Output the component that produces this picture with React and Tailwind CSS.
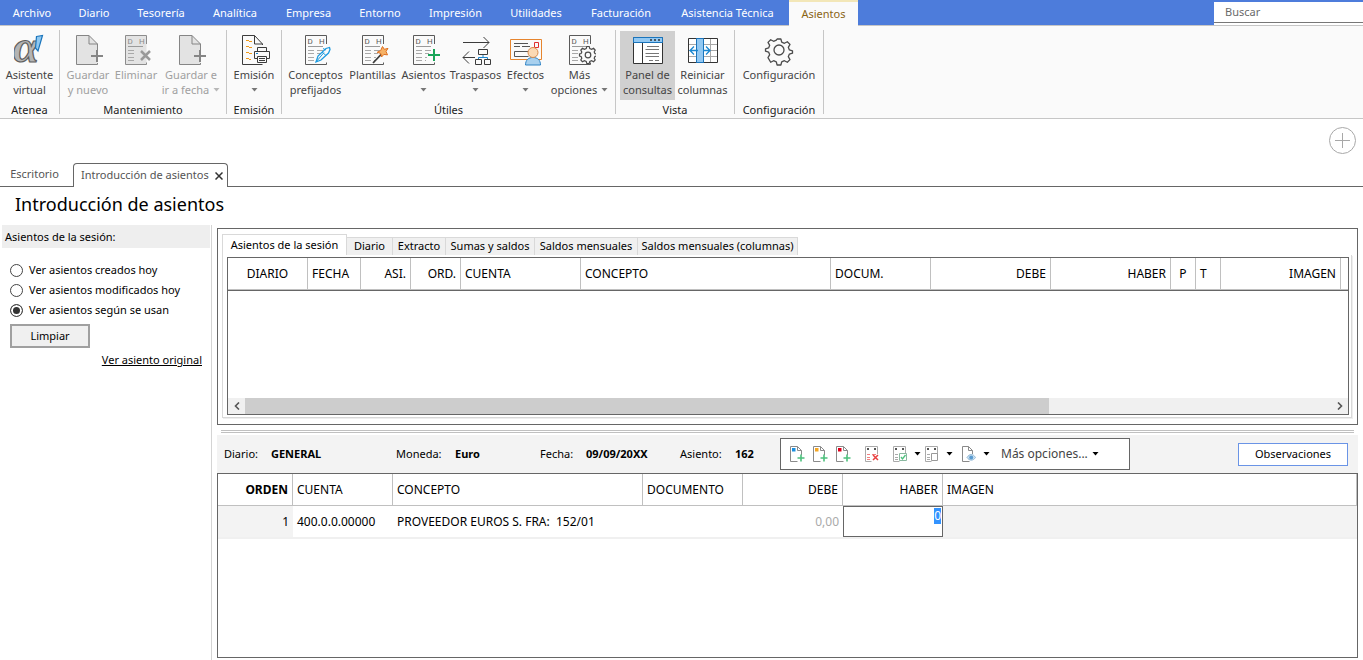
import React from 'react';

/* ---------- Icons ---------- */

function Svg({ size = 32, children }) {
  return (
    <svg width={size} height={size} viewBox={`0 0 ${size} ${size}`} fill="none" aria-hidden="true" className="block shrink-0">
      {children}
    </svg>
  );
}

function AlphaIcon() {
  return (
    <Svg>
      <text x="-1" y="28" fontSize="47" fontWeight="bold" fontStyle="italic" fontFamily="Liberation Serif, serif" fill="#b4b4b4" stroke="#5f5f5f" strokeWidth="1.2">α</text>
      <path d="M22.5 2.5 L28.5 1.5 L24 17 L21.5 14 Z" fill="#8fc8f0" stroke="#1a74bb" strokeWidth="1.2" />
    </Svg>
  );
}

function NewDocIcon() {
  return (
    <Svg>
      <path d="M25.5 17.5V10L17 1.5H4.5v29h21V28" fill="#e3e3e3" />
      <path d="M25.5 16V10L17 1.5H4.5v29h21V29M17 1.5V10h8.5" stroke="#858585" />
      <path d="M25 16v12M19 22h12" stroke="#858585" strokeWidth="2" />
    </Svg>
  );
}

function LedgerBase({ stroke = '#5a5a5a', fill = 'none', cut = 17 }) {
  return (
    <>
      <path d="M5.500 1.500h21v29h-21z" fill={fill} />
      <path d={`M26.500 ${cut - 7}V1.500h-21v29h21v-2`} stroke={stroke} />
      <text x="7.500" y="9.500" fontSize="8" fontFamily="Roboto, sans-serif" fill={stroke}>D</text>
      <text x="19" y="9.500" fontSize="8" fontFamily="Roboto, sans-serif" fill={stroke}>H</text>
      <path d="M8 12.500h15" stroke="#9a9a9a" />
      <path d="M8 16.500h6M8 19.500h6M8 23.500h6M8 26.500h6" stroke="#a8a8a8" />
    </>
  );
}

function RightRows() {
  return <path d="M17 16.500h6M17 19.500h4M17 23.500h2M17 26.500h1" stroke="#a8a8a8" />;
}

function DeleteIcon() {
  return (
    <Svg>
      <LedgerBase stroke="#8c8c8c" fill="#e3e3e3" />
      <path d="M21 17l9 9M30 17l-9 9" stroke="#999" strokeWidth="2.500" />
    </Svg>
  );
}

function EmissionIcon() {
  return (
    <Svg>
      <path d="M24.500 11V10L16.500 1.500h-12v29h20M16.500 1.500V10h8" stroke="#3c3c3c" />
      <path d="M8 6.500h3M8 12.500h3M8 18.500h3M8 24.500h3" stroke="#f09a1a" />
      <path d="M11 7.500h3M11 13.500h3M11 19.500h3M11 25.500h2" stroke="#f09a1a" />
      <path d="M19.500 17.500v-4h9v4M19.500 24.500h-3v-7h15v7h-3" fill="#fafafa" stroke="#3c3c3c" />
      <path d="M19.500 22.500h9v6h-9zM21 24.500h6M21 26.500h6" fill="#fafafa" stroke="#3c3c3c" />
      <path d="M18 19.500h2" stroke="#1a86d0" />
    </Svg>
  );
}

function ConceptsIcon() {
  return (
    <Svg>
      <LedgerBase />
      <RightRows />
      <path d="M16 28l2-6 8-7.500 3.500-1 .5 2-1.500 3.500-7.500 7z" fill="#fafafa" stroke="#1c9be0" strokeWidth="1.300" />
      <path d="M16 28l8-9.500M22 18l4 3.500M26 16l-3-1.500" stroke="#1c9be0" />
    </Svg>
  );
}

function TemplatesIcon() {
  return (
    <Svg>
      <LedgerBase />
      <RightRows />
      <path d="M16 29L25 19.500" stroke="#3c3c3c" strokeWidth="1.800" />
      <path d="M25.500 12.500l1.800 2.800 3.700-.9-2 3 1.500 3.500-3.600-.5-2.400 2.600-.7-3.500-3.600-1.200 3.500-1.800z" fill="#f6b266" stroke="#e07020" />
    </Svg>
  );
}

function EntriesIcon() {
  return (
    <Svg>
      <LedgerBase />
      <RightRows />
      <path d="M26 15v12M20 21h12" stroke="#18a558" strokeWidth="2" />
    </Svg>
  );
}

function TransferIcon() {
  return (
    <Svg>
      <path d="M3 8.500h26M23.500 3l5.500 5.500-5.500 5.500M3 23.500h12M9 17.500l-6 6 6 6" stroke="#3c3c3c" />
      <path d="M18.500 15.500h9v5h-9zM15.500 25.500h6v5h-6zM24.500 25.500h6v5h-6z" stroke="#3c3c3c" />
      <path d="M23 21v3M18.500 25v-1.500h9V25" stroke="#1a86d0" />
    </Svg>
  );
}

function EffectsIcon() {
  return (
    <Svg>
      <path d="M.500 5.500h31v20H.500z" stroke="#e6852e" />
      <path d="M4 9.500h14M4 12.500h6M12 12.500h8M20 17.500H4.500v5h14" stroke="#555" />
      <path d="M24.500 8.500h4v5h-4z" stroke="#e03030" />
      <path d="M15.500 31c0-5 3-7.500 7.500-7.500s7.500 2.500 7.500 7.500z" fill="#a8d0ee" stroke="#2f83c5" />
      <circle cx="23" cy="18.500" r="5" fill="#fbd9b4" stroke="#d98a4a" />
    </Svg>
  );
}

const GEAR =
  'M12.100 2h3.800l.8 3.200 2.700 1.100 2.900-1.600 2.700 2.700-1.700 2.900 1.100 2.600 3.100.9v2.400l-3.100.9-1.100 2.600 1.700 2.900-2.700 2.700-2.900-1.600-2.700 1.100-.8 3.200h-3.800l-.8-3.200-2.700-1.100-2.900 1.600L3 20.600l1.700-2.900-1.100-2.600L.500 14.200v-2.400l3.100-.9 1.100-2.600L3 5.400l2.700-2.700 2.900 1.600 2.700-1.100z';

function MoreOptionsIcon() {
  return (
    <Svg>
      <LedgerBase />
      <path d="M22.800 12.500h2.400l.6 2.100 1.800.8 2-1.100 1.600 1.700-1 1.900.7 1.600 1.600.5v2l-1.600.5-.7 1.700 1 1.800-1.600 1.700-2-1-1.800.7-.6 2.100h-2.400l-.6-2.100-1.800-.7-2 1-1.600-1.700 1-1.800-.7-1.700-1.600-.5v-2l1.600-.5.7-1.600-1-1.900 1.600-1.700 2 1.100 1.800-.8z" fill="#fafafa" stroke="#4a4a4a" strokeWidth="1.200" />
      <circle cx="24" cy="21" r="2.800" stroke="#4a4a4a" strokeWidth="1.200" />
    </Svg>
  );
}

function PanelIcon() {
  return (
    <Svg>
      <path d="M1.500 3.500h29v26h-29z" fill="#fff" stroke="#333" />
      <path d="M1.500 3.500h29v5h-29z" fill="#92c8f2" stroke="#1a74bb" />
      <path d="M18 6h2M22 6h2M26 6h2" stroke="#333" strokeWidth="1.500" />
      <path d="M10.500 9v20" stroke="#333" />
      <path d="M15 12.500h12M13.500 15.500H27M13.500 19.500H27M13.500 22.500H27M17 26.500h4M23 26.500h4" stroke="#777" />
    </Svg>
  );
}

function ResetColumnsIcon() {
  return (
    <Svg>
      <path d="M1.500 4.500h29v24h-29z" fill="#fff" stroke="#333" />
      <path d="M2 10.500h28M2 16.500h28M2 22.500h28M23.500 5v23" stroke="#a8a8a8" />
      <path d="M9.500 4.500h7v24h-7z" fill="#92c8f2" stroke="#1a74bb" />
      <path d="M11 16.500H3M7 12.500l-4 4 4 4M16 16.500h7M19 12.500l4 4-4 4" stroke="#1a86d0" strokeWidth="1.300" />
    </Svg>
  );
}

function ConfigIcon() {
  return (
    <Svg>
      <g transform="translate(2 3)">
        <path d={GEAR} stroke="#4a4a4a" strokeWidth="1.300" strokeLinejoin="round" />
        <circle cx="14" cy="13" r="5" stroke="#4a4a4a" strokeWidth="1.300" />
      </g>
    </Svg>
  );
}

function Caret({ className = '' }) {
  return (
    <svg width="7" height="4" viewBox="0 0 7 4" aria-hidden="true" className={`inline-block shrink-0 ${className}`}>
      <path d="M.500 0h6L3.500 3.500z" fill="currentColor" />
    </svg>
  );
}

function MiniDoc({ mark }) {
  return (
    <Svg size={16}>
      <path d="M12.500 9V4.500l-4-4h-7v15h7M8.500.500v4h4" stroke="#8a8a8a" />
      <path d="M3 2h3.500v3.500H3z" fill={mark} />
      <path d="M12 8.500v7M8.500 12H15.500" stroke="#4cc07c" strokeWidth="1.600" />
    </Svg>
  );
}

function MiniLedger({ rows = '#aaa', children }) {
  return (
    <Svg size={16}>
      <path d="M13.500 8V.500h-12v15h6" stroke="#aaa" />
      <path d="M3 3h2M10 3h2" stroke="#555" strokeWidth="2" />
      <path d="M3 8.500h3M3 11.500h3M3 13.500h3M8 8.500h4" stroke={rows} />
      {children}
    </Svg>
  );
}

/* ---------- Data ---------- */

const MENU = [
  ['Archivo', 'w-16'],
  ['Diario', 'w-15'],
  ['Tesorería', 'w-[74px]'],
  ['Analítica', 'w-[74px]'],
  ['Empresa', 'w-[73px]'],
  ['Entorno', 'w-[70px]'],
  ['Impresión', 'w-[81px]'],
  ['Utilidades', 'w-20'],
  ['Facturación', 'w-[90px]'],
  ['Asistencia Técnica', 'w-[123px]'],
];

const GROUPS = [
  {
    name: 'Atenea', width: 'w-[59px]',
    items: [{ icon: AlphaIcon, l1: 'Asistente', l2: 'virtual', w: 'w-14' }],
  },
  {
    name: 'Mantenimiento', width: 'w-[166px]',
    items: [
      { icon: NewDocIcon, l1: 'Guardar', l2: 'y nuevo', w: 'w-12', off: true },
      { icon: DeleteIcon, l1: 'Eliminar', w: 'w-12', off: true },
      { icon: NewDocIcon, l1: 'Guardar e', l2: 'ir a fecha', w: 'w-[62px]', off: true, caret: true },
    ],
  },
  {
    name: 'Emisión', width: 'w-[54px]',
    items: [{ icon: EmissionIcon, l1: 'Emisión', w: 'w-[54px]', caret: true }],
  },
  {
    name: 'Útiles', width: 'w-[333px]',
    items: [
      { icon: ConceptsIcon, l1: 'Conceptos', l2: 'prefijados', w: 'w-15' },
      { icon: TemplatesIcon, l1: 'Plantillas', w: 'w-[54px]' },
      { icon: EntriesIcon, l1: 'Asientos', w: 'w-12', caret: true },
      { icon: TransferIcon, l1: 'Traspasos', w: 'w-14', caret: true },
      { icon: EffectsIcon, l1: 'Efectos', w: 'w-11', caret: true },
      { icon: MoreOptionsIcon, l1: 'Más', l2: 'opciones', w: 'w-16', caret: true },
    ],
  },
  {
    name: 'Vista', width: 'w-[118px]',
    items: [
      { icon: PanelIcon, l1: 'Panel de', l2: 'consultas', w: 'w-[55px]', active: true },
      { icon: ResetColumnsIcon, l1: 'Reiniciar', l2: 'columnas', w: 'w-[55px]' },
    ],
  },
  {
    name: 'Configuración', width: 'w-[88px]',
    items: [{ icon: ConfigIcon, l1: 'Configuración', w: 'w-[88px]' }],
  },
];

const QUERY_TABS = [
  ['Diario', 'w-[46px]'],
  ['Extracto', 'w-[53px]'],
  ['Sumas y saldos', 'w-[89px]'],
  ['Saldos mensuales', 'w-[103px]'],
  ['Saldos mensuales (columnas)', 'w-[160px]'],
];

const SESSION_COLS = [
  ['DIARIO', 'w-20', 'text-center'],
  ['FECHA', 'w-[53px]', 'text-left'],
  ['ASI.', 'w-[50px]', 'text-right'],
  ['ORD.', 'w-[50px]', 'text-right'],
  ['CUENTA', 'w-[120px]', 'text-left'],
  ['CONCEPTO', 'w-[250px]', 'text-left'],
  ['DOCUM.', 'w-[100px]', 'text-left'],
  ['DEBE', 'w-[120px]', 'text-right'],
  ['HABER', 'w-[120px]', 'text-right'],
  ['P', 'w-[25px]', 'text-center'],
  ['T', 'w-[25px]', 'text-left'],
  ['IMAGEN', 'w-[120px]', 'text-right'],
];

const ENTRY_COLS = [
  ['ORDEN', 'w-[75px]', 'text-right font-bold'],
  ['CUENTA', 'w-[100px]', 'text-left'],
  ['CONCEPTO', 'w-[250px]', 'text-left'],
  ['DOCUMENTO', 'w-[100px]', 'text-left'],
  ['DEBE', 'w-[100px]', 'text-right'],
  ['HABER', 'w-[100px]', 'text-right'],
  ['IMAGEN', '', 'text-left'],
];

/* ---------- Header ---------- */

function MenuBar() {
  return (
    <nav className="flex h-[26px] shrink-0 border-b border-[#c6c6c6] bg-[#4d7cdb] text-white">
      {MENU.map(([label, w]) => (
        <button key={label} type="button" className={`${w} shrink-0 whitespace-nowrap pt-0.5`}>
          {label}
        </button>
      ))}
      <button type="button" className="-mb-px w-[69px] shrink-0 border-t-2 border-[#f3e7b8] bg-[#fafafa] text-[#8a6414]">
        Asientos
      </button>
      <label className="ml-auto mt-0.5 flex w-[149px] flex-col bg-white">
        <span className="sr-only">Buscar</span>
        <input type="text" placeholder="Buscar" className="h-[21px] w-full border-b border-[#777] bg-white pb-0.5 pl-[11px] text-[#444] outline-none placeholder:text-[#6a6a6a]" />
      </label>
    </nav>
  );
}

function RibbonButton({ item }) {
  const Icon = item.icon;
  return (
    <button
      type="button"
      disabled={item.off}
      className={`${item.w} flex h-[69px] shrink-0 flex-col items-center pt-[3px] leading-[15px] whitespace-nowrap ${item.active ? 'bg-[#d0d0d0]' : ''} ${item.off ? 'text-[#a0a0a0]' : 'text-[#444]'}`}
    >
      <Icon />
      <span className="mt-px">{item.l1}</span>
      <span className="flex h-[15px] items-center gap-1">
        {item.l2}
        {item.caret && <Caret className={item.off ? 'text-[#b8b8b8]' : 'text-[#777]'} />}
      </span>
    </button>
  );
}

function Ribbon() {
  return (
    <div className="flex h-[93px] shrink-0 border-b border-[#c6c6c6] bg-[#fafafa]">
      {GROUPS.map((g) => (
        <React.Fragment key={g.name}>
          <section aria-label={g.name} className={`${g.width} flex shrink-0 flex-col pt-[5px]`}>
            <div className="flex justify-center">
              {g.items.map((item, i) => (
                <RibbonButton key={i} item={item} />
              ))}
            </div>
            <div className="pt-0.5 text-center leading-4 text-[#222]">{g.name}</div>
          </section>
          <div className="mt-1 h-[84px] w-px shrink-0 bg-[#c6c6c6]" />
        </React.Fragment>
      ))}
    </div>
  );
}

function DocumentTabs() {
  return (
    <div className="flex h-[68px] shrink-0 flex-col">
      <div className="flex h-11 justify-end pt-2 pr-[7px]">
        <button type="button" aria-label="Nueva pestaña" className="h-[27px] w-[27px]">
          <svg width="27" height="27" viewBox="0 0 27 27" fill="none" stroke="#a8a8a8">
            <circle cx="13.500" cy="13.500" r="13" />
            <path d="M13.500 6v15M6 13.500h15" />
          </svg>
        </button>
      </div>
      <div className="flex h-6 text-[#555]">
        <button type="button" className="w-[73px] border-b border-[#666] pr-1">Escritorio</button>
        <div className="flex w-[155px] items-center gap-1.5 rounded-t border border-b-0 border-[#666] pl-[7px] whitespace-nowrap">
          <span>Introducción de asientos</span>
          <button type="button" aria-label="Cerrar pestaña">
            <svg width="8" height="8" viewBox="0 0 8 8" stroke="#333" strokeWidth="1.500">
              <path d="M.500.500l7 7M7.500.500l-7 7" />
            </svg>
          </button>
        </div>
        <div className="flex-1 border-b border-[#666]" />
      </div>
    </div>
  );
}

/* ---------- Side panel ---------- */

function SidePanel() {
  const options = ['Ver asientos creados hoy', 'Ver asientos modificados hoy', 'Ver asientos según se usan'];
  return (
    <aside className="flex w-[212px] shrink-0 flex-col border-r border-[#d4d4d4] pl-0.5">
      <h2 className="mr-px bg-[#eee] pl-[3px] leading-[23px]">Asientos de la sesión:</h2>
      <fieldset className="mt-3 flex flex-col pl-2">
        {options.map((o, i) => (
          <label key={o} className="flex h-5 items-center gap-1.5">
            <input
              type="radio"
              name="vista"
              defaultChecked={i === 2}
              className="h-[13px] w-[13px] appearance-none rounded-full border border-[#444] bg-white checked:bg-[#333] checked:shadow-[inset_0_0_0_2px_white]"
            />
            {o}
          </label>
        ))}
      </fieldset>
      <button type="button" className="mt-1 ml-2 h-6 w-20 border-2 border-[#a0a0a0] bg-[#f0f0f0]">Limpiar</button>
      <a href="#original" className="mt-1 mr-[9px] self-end leading-4 underline">Ver asiento original</a>
    </aside>
  );
}

/* ---------- Session panel ---------- */

function SessionPanel() {
  return (
    <section className="flex h-[197px] shrink-0 flex-col border border-[#666] px-1 pt-[5px] pb-1.5">
      <div className="flex shrink-0 items-end">
        <button type="button" className="h-[21px] w-[125px] border border-b-0 border-[#d9d9d9] bg-white">Asientos de la sesión</button>
        {QUERY_TABS.map(([t, w]) => (
          <button key={t} type="button" className={`${w} h-[18px] border-t border-r border-[#d9d9d9] bg-[#f0f0f0] whitespace-nowrap`}>
            {t}
          </button>
        ))}
      </div>
      <div className="mr-px flex flex-1 flex-col border border-t-0 border-[#d9d9d9] shadow-[1px_1px_0_#eee]">
        <div className="mr-0.5 mb-0.5 ml-1 mt-0.5 flex flex-1 flex-col border border-[#666]">
          <table className="w-full table-fixed border-separate border-spacing-0 text-xs">
            <thead>
              <tr className="h-8">
                {SESSION_COLS.map(([c, w, a]) => (
                  <th key={c} scope="col" className={`${w} ${a} border-r border-b border-[#c0c0c0] px-1 font-normal`}>{c}</th>
                ))}
                <td className="border-b border-[#c0c0c0]" />
              </tr>
            </thead>
          </table>
          <div className="border-t border-[#666]" />
          <div className="flex-1" />
          <div className="flex h-4 shrink-0 items-center bg-[#f0f0f0]">
            <button type="button" aria-label="Desplazar a la izquierda" className="flex w-[17px] justify-center">
              <svg width="6" height="8" viewBox="0 0 6 8" fill="none" stroke="#555" strokeWidth="1.600"><path d="M5 .500L1.500 4 5 7.500" /></svg>
            </button>
            <div className="h-full flex-1">
              <div className="h-full w-[74%] bg-[#cdcdcd]" />
            </div>
            <button type="button" aria-label="Desplazar a la derecha" className="flex w-[17px] justify-center">
              <svg width="6" height="8" viewBox="0 0 6 8" fill="none" stroke="#555" strokeWidth="1.600"><path d="M1 .500L4.500 4 1 7.500" /></svg>
            </button>
          </div>
        </div>
      </div>
    </section>
  );
}

/* ---------- Entry panel ---------- */

function Field({ label, value, w, gap }) {
  return (
    <div className={`flex shrink-0 whitespace-nowrap ${w}`}>
      <span className={gap}>{label}</span>
      <b>{value}</b>
    </div>
  );
}

function ToolButton({ label, w, caret, children }) {
  return (
    <button type="button" aria-label={label} className={`${w} flex shrink-0 items-center gap-1.5 text-black`}>
      {children}
      {caret && <Caret />}
    </button>
  );
}

function EntryBar() {
  return (
    <div className="flex h-[38px] shrink-0 items-center bg-[#f3f3f3] pl-[7px]">
      <Field label="Diario:" value="GENERAL" w="w-[172px]" gap="w-[47px]" />
      <Field label="Moneda:" value="Euro" w="w-36" gap="w-[59px]" />
      <Field label="Fecha:" value="09/09/20XX" w="w-[140px]" gap="w-[46px]" />
      <Field label="Asiento:" value="162" w="w-[100px]" gap="w-[55px]" />
      <div className="flex h-8 w-[350px] shrink-0 items-center border border-[#666] bg-white pl-2">
        <ToolButton label="Nuevo asiento" w="w-[23px]"><MiniDoc mark="#1a8fe0" /></ToolButton>
        <ToolButton label="Nuevo apunte" w="w-[23px]"><MiniDoc mark="#f5a623" /></ToolButton>
        <ToolButton label="Nueva línea" w="w-[29px]"><MiniDoc mark="#e0001b" /></ToolButton>
        <ToolButton label="Eliminar apunte" w="w-7">
          <MiniLedger rows="#f08080"><path d="M9 9l5 5M14 9l-5 5" stroke="#e84040" strokeWidth="1.500" /></MiniLedger>
        </ToolButton>
        <ToolButton label="Validar" w="w-8" caret>
          <MiniLedger><path d="M7.500 7.500h7v7h-7z" fill="#fff" stroke="#8ab8a0" /><path d="M9 11l1.500 2 3-4" stroke="#4cc07c" strokeWidth="1.300" /></MiniLedger>
        </ToolButton>
        <ToolButton label="Copiar" w="w-[37px]" caret>
          <MiniLedger><path d="M7.500 7.500h6v7h-6z" fill="#fff" stroke="#999" /></MiniLedger>
        </ToolButton>
        <ToolButton label="Ver documento" w="w-10" caret>
          <Svg size={16}>
            <path d="M11.500 8V4.500l-4-4h-6v15h7M7.500.500v4h4" stroke="#8a8a8a" />
            <path d="M6 11.500c2.500-4 6-4 8.500 0-2.500 3.500-6 3.500-8.500 0z" fill="#cfe3f2" stroke="#8fb6d4" />
            <circle cx="10.200" cy="11.500" r="2" fill="#5a9bd0" />
          </Svg>
        </ToolButton>
        <button type="button" className="flex items-center gap-1 text-xs whitespace-nowrap text-[#444]">
          Más opciones... <Caret className="text-black" />
        </button>
      </div>
      <button type="button" className="mr-[10px] ml-auto h-[23px] w-[110px] border border-[#6a94e6] bg-white">Observaciones</button>
    </div>
  );
}

function EntryGrid() {
  return (
    <div className="flex-1 border border-[#666] text-xs">
      <table className="w-full table-fixed border-separate border-spacing-0">
        <thead>
          <tr className="h-8">
            {ENTRY_COLS.map(([c, w, a]) => (
              <th key={c} scope="col" className={`${w} ${a} border-r border-b border-[#c0c0c0] px-1 ${c === 'ORDEN' ? '' : 'font-normal'}`}>{c}</th>
            ))}
          </tr>
        </thead>
        <tbody>
          <tr className="h-[33px]">
            <td className="border-b-2 border-[#f0f0f0] bg-[#f3f3f3] pr-1 text-right">1</td>
            <td className="border-b-2 border-[#f0f0f0] pl-1">400.0.0.00000</td>
            <td className="border-b-2 border-[#f0f0f0] pl-1 whitespace-pre">PROVEEDOR EUROS S. FRA:  152/01</td>
            <td className="border-b-2 border-[#f0f0f0]" />
            <td className="border-b-2 border-[#f0f0f0] pr-1 text-right text-[#aaa]">0,00</td>
            <td className="border-b-2 border-[#f0f0f0] p-0">
              <label className="flex h-[31px] justify-end border border-[#666] bg-white p-px">
                <span className="sr-only">Haber</span>
                <input type="text" defaultValue="0" className="h-4 w-[7px] bg-[#3393ff] p-0 text-right text-white outline-none" />
              </label>
            </td>
            <td className="border-b-2 border-[#f0f0f0] bg-[#f3f3f3]" />
          </tr>
        </tbody>
      </table>
    </div>
  );
}

export default function App() {
  return (
    <div className="flex min-h-screen flex-col bg-white font-['Noto_Sans','Open_Sans',sans-serif] text-[11px] text-black">
      <MenuBar />
      <Ribbon />
      <DocumentTabs />
      <h1 className="h-[38px] shrink-0 pl-[15px] text-lg leading-[35px]">Introducción de asientos</h1>
      <main className="flex flex-1">
        <SidePanel />
        <div className="flex min-w-0 flex-1 flex-col pt-[3px] pr-[5px] pb-0.5 pl-[5px]">
          <SessionPanel />
          <div className="mx-1 mt-[5px] mb-0.5 h-[3px] shrink-0 border-y border-[#c0c0c0]" />
          <EntryBar />
          <EntryGrid />
        </div>
      </main>
    </div>
  );
}
